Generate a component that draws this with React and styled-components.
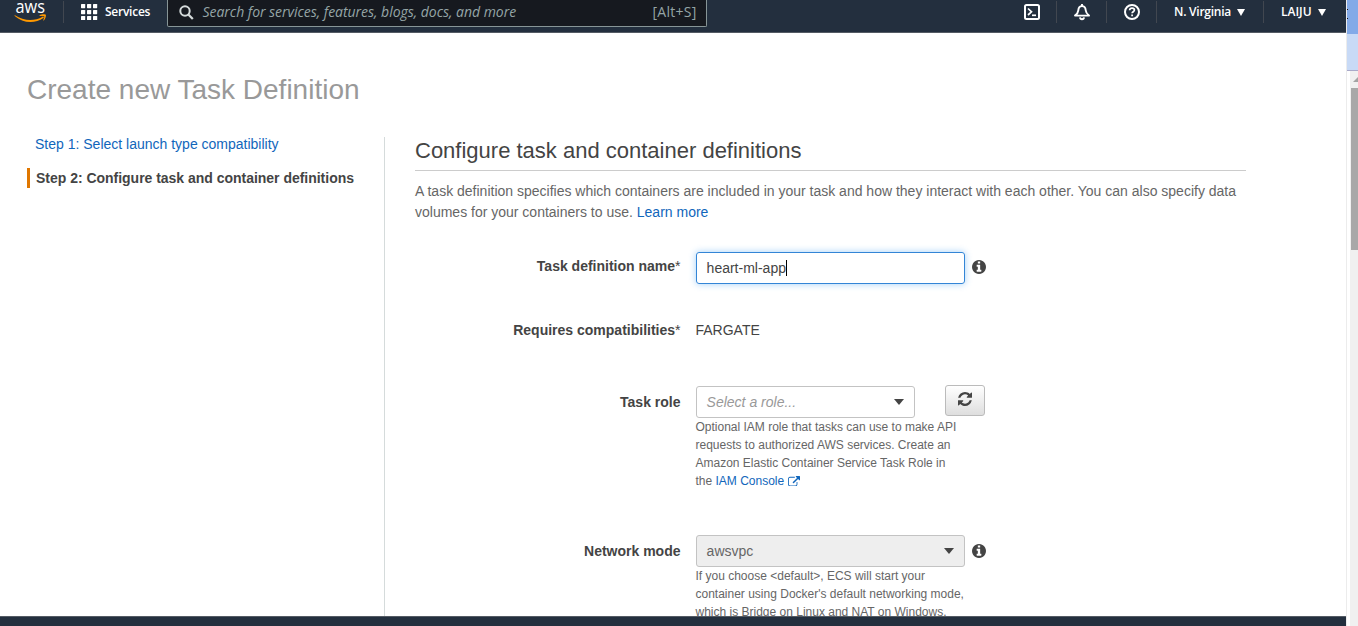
import React from "react";
import styled, { createGlobalStyle } from "styled-components";

const GlobalStyle = createGlobalStyle`
  *, *::before, *::after { box-sizing: border-box; }
  html, body { margin: 0; padding: 0; overflow: hidden; background: #fff; }
  body { font-family: "Liberation Sans", Arial, sans-serif; font-size: 14px; color: #444; }
  h1, h2, p { margin: 0; font-weight: 400; }
  a { color: #1166bb; text-decoration: none; }
  svg { display: block; }
`;

const Screen = styled.div`
  display: flex;
  width: 1358px;
  height: 626px;
  overflow: hidden;
`;

const Console = styled.div`
  display: flex;
  flex-direction: column;
  width: 1346px;
  height: 626px;
`;

/* ---------- top navigation ---------- */

const NavBar = styled.header`
  display: flex;
  flex: none;
  height: 33px;
  background: #232f3e;
  border-bottom: 1px solid #545b64;
  font-family: "Open Sans", sans-serif;
  color: #fff;
`;

const LogoLink = styled.div`
  width: 63px;
  padding-left: 14px;
`;

const Divider = styled.span`
  flex: none;
  width: 1px;
  height: 22px;
  margin-top: 1px;
  background: #414750;
`;

const ServicesButton = styled.div`
  display: flex;
  gap: 7px;
  width: 103px;
  padding: 4px 0 0 17px;
`;

const NavLabel = styled.span`
  font-size: 12px;
  line-height: 16px;
  font-weight: 600;
  letter-spacing: ${(p) => p.$spacing || "0"};
  white-space: nowrap;
`;

const SearchBox = styled.div`
  display: flex;
  width: 540px;
  height: 27px;
  padding: 3px 9.5px 0 10.5px;
  background: #16191f;
  border: 1px solid #879596;
  border-top: 0;
  border-radius: 0 0 2px 2px;
  color: #95a5a6;
  font-size: 14px;
  line-height: 18px;
`;

const SearchHint = styled.span`
  flex: 1;
  margin-left: 9px;
  font-style: italic;
  letter-spacing: -0.03px;
  white-space: nowrap;
`;

const Shortcut = styled.span`
  letter-spacing: 0.25px;
`;

const NavTools = styled.div`
  display: flex;
  margin-left: auto;
`;

const NavIcon = styled.div`
  display: flex;
  justify-content: center;
  width: 49px;
  padding-top: 3px;
`;

const NavMenu = styled.div`
  display: flex;
  gap: 6px;
  width: ${(p) => p.$width}px;
  padding: 4px 0 0 17px;
`;

const Caret = styled.span`
  width: 0;
  height: 0;
  margin-top: ${(p) => p.$top || 0}px;
  border: solid transparent;
  border-width: ${(p) => p.$h}px ${(p) => p.$w}px 0;
  border-top-color: ${(p) => p.$color};
`;

/* ---------- page body ---------- */

const Page = styled.main`
  flex: 1;
  min-height: 0;
  overflow: hidden;
  padding: 41px 100px 0 27px;
`;

const PageTitle = styled.h1`
  height: 63px;
  font-size: 28px;
  line-height: 32px;
  color: #999;
`;

const Columns = styled.div`
  display: flex;
  height: 480px;
`;

const Steps = styled.nav`
  width: 358px;
  border-right: 1px solid #d5dbdb;
`;

const Step = styled.div`
  height: 20px;
  margin-bottom: 14px;
  padding-left: ${(p) => (p.$active ? 6 : 8)}px;
  border-left: ${(p) => (p.$active ? "3px solid #e07700" : "0")};
  font-weight: ${(p) => (p.$active ? 700 : 400)};
  letter-spacing: ${(p) => (p.$active ? "-0.02px" : "0")};
  line-height: 20px;
  color: ${(p) => (p.$active ? "#444" : "#1166bb")};
  white-space: nowrap;
  &:first-child { margin-top: -3px; }
`;

const Content = styled.section`
  width: 831px;
  margin-left: 30px;
`;

const SectionTitle = styled.h2`
  height: 34px;
  padding-top: 1px;
  border-bottom: 1px solid #ccc;
  font-size: 22px;
  line-height: 26px;
  color: #444;
`;

const Intro = styled.p`
  height: 71px;
  padding-top: 10px;
  line-height: 21px;
  color: #666;
  white-space: nowrap;
`;

const FormRow = styled.div`
  display: flex;
  height: ${(p) => p.$height}px;
`;

const FieldLabel = styled.label`
  width: 265.5px;
  margin-right: 15.5px;
  padding-top: ${(p) => p.$top ?? 6}px;
  font-weight: 700;
  line-height: 20px;
  text-align: right;
`;

const Required = styled.span`
  font-weight: 400;
`;

const FieldBody = styled.div`
  width: 300px;
  padding-top: ${(p) => p.$top || 0}px;
`;

const Controls = styled.div`
  display: flex;
`;

const TextField = styled.div`
  display: flex;
  align-items: center;
  width: 269px;
  height: 32px;
  padding-left: 9.6px;
  border: 1px solid #3385d6;
  border-radius: 3px;
  box-shadow: 0 0 7px rgba(51, 150, 240, 0.45);
`;

const TextCursor = styled.span`
  width: 1px;
  height: 16px;
  background: #000;
`;

const SelectField = styled.div`
  display: flex;
  justify-content: space-between;
  width: ${(p) => p.$width}px;
  height: 32px;
  padding: 0 10px 0 9.6px;
  background: ${(p) => (p.$disabled ? "#eee" : "#fff")};
  border: 1px solid #c3c3c3;
  border-radius: 3px;
  line-height: 30px;
  font-style: ${(p) => (p.$disabled ? "normal" : "italic")};
  color: ${(p) => (p.$disabled ? "#666" : "#999")};
`;

const InfoMark = styled.span`
  margin: ${(p) => p.$top}px 0 0 7px;
`;

const RefreshButton = styled.div`
  display: flex;
  justify-content: center;
  width: 40px;
  height: 31px;
  margin: -1px 0 0 30px;
  padding-top: 6px;
  background: linear-gradient(#fff, #dedede);
  border: 1px solid #bbb;
  border-radius: 3px;
`;

const Value = styled.span`
  margin-left: -0.5px;
  line-height: 20px;
`;

const HelpText = styled.p`
  margin-left: -0.5px;
  font-size: 12px;
  line-height: 18px;
  color: #666;
  white-space: nowrap;
  svg { display: inline-block; margin-left: 4px; vertical-align: -1px; }
`;

const FooterBar = styled.footer`
  flex: none;
  height: 10px;
  background: #232f3e;
  border-top: 1px solid #545b64;
`;

/* ---------- browser edge ---------- */

const WindowEdge = styled.aside`
  display: flex;
  flex-direction: column;
  width: 12px;
  border-left: 1px solid #ececec;
`;

const TabStrip = styled.div`
  height: 34px;
  padding-top: 9px;
  background: #83aae8;
  &::before, &::after {
    content: "";
    display: block;
    width: 1px;
    height: 1px;
    margin-bottom: 8px;
    background: #111;
  }
`;

const ToolStrip = styled.div`
  height: 37px;
  background: #c8daf6;
  border-bottom: 1px solid #a9a9c9;
`;

const ScrollTrack = styled.div`
  flex: 1;
  margin-left: 3px;
  padding: 6px 0 0 1px;
  background: #f0f0f0;
  overflow: hidden;
`;

const ScrollThumb = styled.div`
  height: 162px;
  margin-top: 6px;
  background: #a8a8a8;
`;

/* ---------- icons ---------- */

const AwsLogo = () => (
  <svg width="34" height="24" viewBox="0 0 34 24">
    <text x="1.500" y="12.500" fill="#fff" fontFamily="Open Sans, sans-serif" fontSize="17.500" fontWeight="400" textLength="29.500" lengthAdjust="spacingAndGlyphs">aws</text>
    <path d="M1 15.300c8.500 5.800 19.500 6.200 27.600 1.400.9-.5 1.700.6.8 1.300C21 24 8.500 23.200.7 16c-.4-.5-.1-1 .3-.7z" fill="#f90" />
    <path d="M25.500 15.500c2.200-1.500 5.800-1.300 6.300-.7.5.7-.2 4-2 5.600-.5.3-.7.100-.5-.3.5-1.200 1.300-3.400.9-3.900-.4-.5-2.800-.3-4.300-.1-.5 0-.7-.3-.4-.6z" fill="#f90" />
  </svg>
);

const GridIcon = () => (
  <svg width="17" height="16" viewBox="0 0 17 16" fill="#fff">
    {[0, 6, 12].map((y) => [0, 6, 12].map((x) => (
      <rect key={`${x}-${y}`} x={x} y={y} width="4.200" height="4.200" rx="0.6" />
    )))}
  </svg>
);

const SearchGlyph = styled.svg`
  margin-top: 2px;
`;

const SearchIcon = () => (
  <SearchGlyph width="15" height="16" viewBox="0 0 15 16" fill="none" stroke="#d5dbdb" strokeWidth="2">
    <circle cx="6" cy="6" r="4.700" />
    <path d="M9.300 9.500l4.500 4.500" strokeWidth="2.300" />
  </SearchGlyph>
);

const ShellIcon = () => (
  <svg width="18" height="18" viewBox="0 0 18 18" fill="none" stroke="#fff" strokeWidth="2">
    <rect x="2" y="2" width="14" height="14" rx="1.500" />
    <path d="M5 5.500l3.500 3.300L5 12" strokeWidth="1.700" />
    <path d="M9 12.300h4" strokeWidth="1.700" />
  </svg>
);

const BellIcon = () => (
  <svg width="18" height="18" viewBox="0 0 18 18" fill="none" stroke="#fff" strokeWidth="1.900" strokeLinejoin="round">
    <path d="M2 12.600c2.400-1.800 3.100-3.200 3.300-5.300C5.500 4.600 6.900 3.100 9 3.100s3.500 1.500 3.700 4.200c.2 2.100.9 3.500 3.300 5.300z" />
    <path d="M9 1v2M7 14.300c.3 2.600 3.700 2.600 4 0" />
  </svg>
);

const HelpIcon = () => (
  <svg width="18" height="18" viewBox="0 0 18 18" fill="none" stroke="#fff" strokeWidth="2">
    <circle cx="9" cy="9" r="7" />
    <path d="M6.600 7.300c.1-1.500 1.100-2.200 2.400-2.200s2.400.8 2.400 2c0 1.600-2.300 1.700-2.300 3.200M9.100 11.500v1.800" strokeWidth="1.700" />
  </svg>
);

const InfoIcon = () => (
  <svg width="14" height="14" viewBox="128 128 1536 1536" fill="#444">
    <path d="M1152 1376v-160q0-14-9-23t-23-9h-96v-512q0-14-9-23t-23-9h-320q-14 0-23 9t-9 23v160q0 14 9 23t23 9h96v320h-96q-14 0-23 9t-9 23v160q0 14 9 23t23 9h448q14 0 23-9t9-23zm-128-896v-160q0-14-9-23t-23-9h-192q-14 0-23 9t-9 23v160q0 14 9 23t23 9h192q14 0 23-9t9-23zm640 416q0 209-103 385.500t-279.500 279.500-385.500 103-385.500-103-279.500-279.500-103-385.500 103-385.500 279.500-279.500 385.500-103 385.500 103 279.500 279.500 103 385.500z" />
  </svg>
);

const RefreshIcon = () => (
  <svg width="14" height="14" viewBox="0 0 1536 1536" fill="#444">
    <path d="M1511 928q0 5-1 7-64 268-268 434.500t-478 166.500q-146 0-282.500-55t-243.500-157l-129 129q-19 19-45 19t-45-19-19-45v-448q0-26 19-45t45-19h448q26 0 45 19t19 45-19 45l-137 137q71 66 161 102t187 36q134 0 250-65t186-179q11-17 53-117 8-23 30-23h192q13 0 22.500 9.500t9.500 22.500zm25-800v448q0 26-19 45t-45 19h-448q-26 0-45-19t-19-45 19-45l138-138q-148-137-349-137-134 0-250 65t-186 179q-11 17-53 117-8 23-30 23h-199q-13 0-22.500-9.500t-9.500-22.500v-7q65-268 270-434.500t480-166.500q146 0 284 55.500t245 156.500l130-129q19-19 45-19t45 19 19 45z" />
  </svg>
);

const ExternalIcon = () => (
  <svg width="12" height="10.300" viewBox="0 0 1792 1536" fill="#1166bb">
    <path d="M1408 928v320q0 119-84.500 203.500t-203.500 84.500h-832q-119 0-203.500-84.500t-84.500-203.500v-832q0-119 84.500-203.500t203.500-84.500h704q14 0 23 9t9 23v64q0 14-9 23t-23 9h-704q-66 0-113 47t-47 113v832q0 66 47 113t113 47h832q66 0 113-47t47-113v-320q0-14 9-23t23-9h64q14 0 23 9t9 23zm384-864v512q0 26-19 45t-45 19-45-19l-176-176-652 652q-10 10-23 10t-23-10l-114-114q-10-10-10-23t10-23l652-652-176-176q-19-19-19-45t19-45 45-19h512q26 0 45 19t19 45z" />
  </svg>
);

const ScrollUpIcon = () => (
  <svg width="8" height="5" viewBox="0 0 8 5" fill="#a3a3a3">
    <path d="M2 5L7 0l5 5z" />
  </svg>
);

export default function App() {
  return (
    <Screen>
      <GlobalStyle />
      <Console>
        <NavBar>
          <LogoLink><AwsLogo /></LogoLink>
          <Divider />
          <ServicesButton>
            <GridIcon />
            <NavLabel $spacing="-0.25px">Services</NavLabel>
          </ServicesButton>
          <SearchBox>
            <SearchIcon />
            <SearchHint>Search for services, features, blogs, docs, and more</SearchHint>
            <Shortcut>[Alt+S]</Shortcut>
          </SearchBox>
          <NavTools>
            <NavIcon><ShellIcon /></NavIcon>
            <Divider />
            <NavIcon><BellIcon /></NavIcon>
            <Divider />
            <NavIcon><HelpIcon /></NavIcon>
            <Divider />
            <NavMenu $width={106}>
              <NavLabel $spacing="-0.25px">N. Virginia</NavLabel>
              <Caret $w={4} $h={7} $top={5} $color="#fff" />
            </NavMenu>
            <Divider />
            <NavMenu $width={82}>
              <NavLabel>LAIJU</NavLabel>
              <Caret $w={4} $h={7} $top={5} $color="#fff" />
            </NavMenu>
          </NavTools>
        </NavBar>

        <Page>
          <PageTitle>Create new Task Definition</PageTitle>
          <Columns>
            <Steps>
              <Step>Step 1: Select launch type compatibility</Step>
              <Step $active>Step 2: Configure task and container definitions</Step>
            </Steps>
            <Content>
              <SectionTitle>Configure task and container definitions</SectionTitle>
              <Intro>
                A task definition specifies which containers are included in your task and how they interact with each other. You can also specify data
                <br />
                volumes for your containers to use. <a>Learn more</a>
              </Intro>

              <FormRow $height={68}>
                <FieldLabel $top={14}>Task definition name<Required>*</Required></FieldLabel>
                <FieldBody $top={10}>
                  <Controls>
                    <TextField>heart-ml-app<TextCursor /></TextField>
                    <InfoMark $top={8}><InfoIcon /></InfoMark>
                  </Controls>
                </FieldBody>
              </FormRow>

              <FormRow $height={76}>
                <FieldLabel $top={10}>Requires compatibilities<Required>*</Required></FieldLabel>
                <FieldBody $top={10}>
                  <Controls><Value>FARGATE</Value></Controls>
                </FieldBody>
              </FormRow>

              <FormRow $height={149}>
                <FieldLabel>Task role</FieldLabel>
                <FieldBody>
                  <Controls>
                    <SelectField $width={219}>
                      Select a role...
                      <Caret $w={5.5} $h={6} $top={12} $color="#444" />
                    </SelectField>
                    <RefreshButton><RefreshIcon /></RefreshButton>
                  </Controls>
                  <HelpText>
                    Optional IAM role that tasks can use to make API<br />
                    requests to authorized AWS services. Create an<br />
                    Amazon Elastic Container Service Task Role in<br />
                    the <a>IAM Console<ExternalIcon /></a>
                  </HelpText>
                </FieldBody>
              </FormRow>

              <FormRow $height={90}>
                <FieldLabel>Network mode</FieldLabel>
                <FieldBody>
                  <Controls>
                    <SelectField $width={269} $disabled>
                      awsvpc
                      <Caret $w={5.5} $h={6} $top={12} $color="#444" />
                    </SelectField>
                    <InfoMark $top={9}><InfoIcon /></InfoMark>
                  </Controls>
                  <HelpText>
                    If you choose &lt;default&gt;, ECS will start your<br />
                    container using Docker's default networking mode,<br />
                    which is Bridge on Linux and NAT on Windows.
                  </HelpText>
                </FieldBody>
              </FormRow>
            </Content>
          </Columns>
        </Page>
        <FooterBar />
      </Console>

      <WindowEdge>
        <TabStrip />
        <ToolStrip />
        <ScrollTrack>
          <ScrollUpIcon />
          <ScrollThumb />
        </ScrollTrack>
      </WindowEdge>
    </Screen>
  );
}
